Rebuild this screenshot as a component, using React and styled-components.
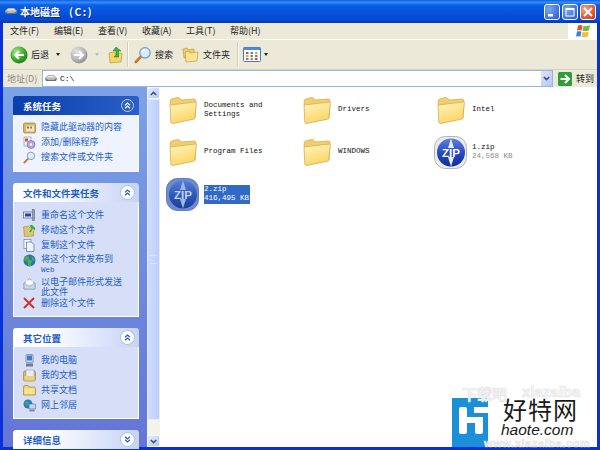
import React from 'react'
import styled, { createGlobalStyle, css } from 'styled-components'

const Global = createGlobalStyle`
  html, body { margin: 0; padding: 0; background: #fff; }
  body { font-family: "Noto Sans CJK SC", "Liberation Sans", sans-serif; }
`

const cjk = `"Noto Sans CJK SC", "Liberation Sans", sans-serif`
const mono = `"Liberation Mono", "Noto Sans CJK SC", monospace`

const Win = styled.div`
  position: relative;
  width: 600px;
  height: 450px;
  overflow: hidden;
  display: flex;
  flex-direction: column;
  background: #0831d9;
  padding: 0 3px 3px;
  box-sizing: border-box;
`
const TitleBar = styled.div`
  height: 23px;
  margin: 0 -3px;
  padding: 0 4px 0 5px;
  flex: none;
  display: flex;
  align-items: center;
  background: linear-gradient(180deg, #0a5fe8 0%, #3a8cf6 10%, #0b5fe6 22%, #0553dd 55%, #0349d2 85%, #0239b8 100%);
`
const TitleText = styled.div`
  margin-left: 3px;
  font: 700 10px ${cjk};
  color: #fff;
  text-shadow: 1px 1px 0 #0a2a90;
  white-space: pre;
  flex: 1;
`
const DriveLetter = styled.span`
  margin-left: 9px;
  letter-spacing: 1.5px;
  font-size: 10.5px;
`
const CapBtn = styled.div`
  width: 16px;
  height: 16px;
  margin-left: 2px;
  box-sizing: border-box;
  border: 1px solid #fff;
  border-radius: 3px;
  display: flex;
  align-items: center;
  justify-content: center;
  background: ${p => p.$close
    ? 'radial-gradient(circle at 30% 30%, #f0a488, #d9512c 70%, #b8371a)'
    : 'radial-gradient(circle at 30% 30%, #7fa6f2, #3c6fe0 70%, #2a55c8)'};
`
const MenuRow = styled.div`
  height: 17px;
  flex: none;
  display: flex;
  background: #ece9d8;
  border-bottom: 1px solid #fdfcf7;
  box-sizing: border-box;
`
const MenuItems = styled.div`
  flex: 1;
  display: flex;
  align-items: center;
  padding: 0 0 1px 7px;
  gap: 13px;
`
const MenuItem = styled.span`
  width: 31px;
  font: 9px ${cjk};
  color: #222;
  white-space: nowrap;
`
const FlagBox = styled.div`
  width: 29px;
  background: #fff;
  display: flex;
  align-items: center;
  justify-content: center;
`
const Toolbar = styled.div`
  height: 30px;
  flex: none;
  display: flex;
  align-items: center;
  padding-left: 7px;
  background: #ece9d8;
  border-bottom: 1px solid #d8d4bf;
  box-sizing: border-box;
`
const ToolText = styled.span`
  font: 9px ${cjk};
  color: #222;
  margin-left: ${p => p.$ml || 3}px;
  margin-right: ${p => p.$mr || 0}px;
  white-space: nowrap;
`
const Caret = styled.span`
  width: 0;
  height: 0;
  border: 2px solid transparent;
  border-top: 3px solid ${p => p.$off ? '#bbb' : '#222'};
  border-bottom: 0;
  margin: 0 ${p => p.$mr || 0}px 0 ${p => p.$ml || 0}px;
`
const Sep = styled.div`
  width: 1px;
  height: 25px;
  background: #d2ceb8;
  border-right: 1px solid #fbfaf4;
  margin: 0 ${p => p.$right}px 0 ${p => p.$left}px;
`
const AddressRow = styled.div`
  height: 17px;
  flex: none;
  display: flex;
  align-items: center;
  background: #ece9d8;
`
const AddrLabel = styled.span`
  width: 39px;
  padding-left: 4px;
  box-sizing: border-box;
  font: 9px ${cjk};
  color: #8a8a80;
  white-space: nowrap;
`
const AddrField = styled.div`
  width: 511px;
  height: 17px;
  box-sizing: border-box;
  background: #fff;
  border: 1px solid #9db4dc;
  display: flex;
  align-items: center;
  padding-left: 2px;
`
const AddrValue = styled.span`
  margin-left: 3px;
  flex: 1;
  font: 8px ${mono};
  color: #111;
`
const DropBtn = styled.div`
  width: 11px;
  height: 15px;
  background: linear-gradient(135deg, #dbe5fb, #b4c8f4);
  display: flex;
  align-items: center;
  justify-content: center;
`
const GoBtn = styled.div`
  margin-left: 5px;
  display: flex;
  align-items: center;
  gap: 4px;
  font: 9px ${cjk};
  color: #222;
`
const Body = styled.div`
  flex: 1;
  min-height: 0;
  display: flex;
  background: #fff;
`
const Sidebar = styled.div`
  width: 144px;
  flex: none;
  padding: 9px 8px 0 10px;
  box-sizing: border-box;
  background: linear-gradient(180deg, #7ba2e7, #6375d6);
  display: flex;
  flex-direction: column;
  gap: 11px;
`
const Panel = styled.div`
  flex: none;
`
const PanelHead = styled.div`
  height: 19px;
  padding: 0 5px 0 10px;
  box-sizing: border-box;
  border-radius: 3px 3px 0 0;
  display: flex;
  align-items: center;
  justify-content: space-between;
  font: 700 9.5px ${cjk};
  ${p => p.$primary
    ? css`
        background: linear-gradient(90deg, #0a3eaa, #2a5ec8);
        color: #fff;
      `
    : css`
        background: linear-gradient(90deg, #fff 25%, #c6d3f7);
        color: #215dc6;
      `}
`
const Chevron = styled.div`
  width: 13px;
  height: 13px;
  border-radius: 50%;
  display: flex;
  align-items: center;
  justify-content: center;
  box-sizing: border-box;
  ${p => p.$primary
    ? css`
        border: 1px solid #b9c9ee;
        background: #2a5ec8;
      `
    : css`
        background: #fff;
        box-shadow: 0 0 0 1px #b4c4ea;
      `}
`
const PanelBody = styled.div`
  padding: ${p => p.$primary ? '6px 4px 9px 9px' : '7px 4px 8px 9px'};
  border: 1px solid #fff;
  border-top: 0;
  display: flex;
  flex-direction: column;
  gap: 4px;
  background: ${p => p.$primary ? '#eff3ff' : '#d6dff7'};
`
const TaskRow = styled.div`
  display: flex;
  align-items: flex-start;
  min-height: 11px;
  font: 9px/${p => p.$pull !== undefined ? 10 : 11}px ${cjk};
  color: #215dc6;
  margin-bottom: ${p => p.$pull || 0}px;
`
const TaskIcon = styled.div`
  width: 18px;
  height: 11px;
  flex: none;
  display: flex;
  justify-content: flex-start;
`
const SmallWeb = styled.span`
  font: 7.5px ${mono};
`
const Scrollbar = styled.div`
  width: 13px;
  flex: none;
  display: flex;
  flex-direction: column;
  background: #f4f3ea;
  box-sizing: border-box;
`
const ScrollArrow = styled.div`
  height: 12px;
  flex: none;
  background: linear-gradient(135deg, #e4ecfd, #b5c8f5);
  border: 1px solid #f4f6fe;
  box-sizing: border-box;
  border-radius: 2px;
  display: flex;
  align-items: center;
  justify-content: center;
`
const ScrollThumb = styled.div`
  flex: none;
  height: 321px;
  background: linear-gradient(90deg, #cfdcfd, #bccffb);
  border: 1px solid #e6ecfe;
  box-sizing: border-box;
  border-radius: 2px;
  display: flex;
  align-items: center;
  justify-content: center;
`
const Grip = styled.div`
  width: 7px;
  height: 7px;
  border-top: 1px solid #dde6fe;
  border-bottom: 1px solid #dde6fe;
`
const ScrollRest = styled.div`
  flex: 1;
`
const FileGrid = styled.div`
  flex: 1;
  padding: 2px 0 0 5px;
  display: grid;
  grid-template-columns: repeat(3, 134px);
  grid-auto-rows: 42px;
  align-content: start;
`
const FileTile = styled.div`
  display: flex;
  align-items: center;
`
const IconSlot = styled.div`
  width: 39px;
  height: 36px;
  flex: none;
  display: flex;
  align-items: center;
  justify-content: center;
  padding-right: 4px;
  box-sizing: border-box;
`
const FileLabel = styled.div`
  font: 7.5px/9.5px ${mono};
  color: #111;
  white-space: pre;
  ${p => p.$selected && css`
    background: #316ac5;
    color: #fff;
    padding-right: 1px;
  `}
`
const FileMeta = styled.span`
  color: ${p => p.$selected ? '#fff' : '#8e8e8e'};
`
const Watermark = styled.div`
  position: absolute;
  left: 452px;
  top: 398px;
  width: 145px;
  height: 49px;
  display: flex;
`
const GhostText = styled.div`
  position: absolute;
  left: ${p => p.$left}px;
  top: ${p => p.$top}px;
  font: 700 ${p => p.$size}px "Liberation Sans", ${cjk};
  letter-spacing: ${p => p.$track || 0}px;
  color: #f8f8f8;
  -webkit-text-stroke: 0.6px #e2e2e2;
  white-space: nowrap;
`
const BrandText = styled.div`
  margin-left: 13px;
  display: flex;
  flex-direction: column;
  position: relative;
`
const BrandName = styled.div`
  font: 24px/26px ${cjk};
  letter-spacing: 1px;
  color: #1a1a1a;
  margin: -2px 0 0 2px;
  white-space: nowrap;
`
const BrandUrl = styled.div`
  font: italic 15.5px/15px "Liberation Sans", sans-serif;
  color: #1a1a1a;
  white-space: nowrap;
`

/* ---- drawn icons ---- */

const DriveIcon = () => (
  <svg width="12" height="9" viewBox="0 0 12 9">
    <path d="M0 4 L3 1 H9 L12 4 L11 7 H1 Z" fill="#b8b8b8" />
    <path d="M0 4 L1 7 H11 L12 4 L9 6 H3 Z" fill="#6f6f6f" />
    <path d="M3 2 H9 L10 3.5 H2 Z" fill="#e6e6e6" />
  </svg>
)

const BackIcon = ({ off }) => (
  <svg width="18" height="18" viewBox="0 0 18 18">
    <defs>
      <radialGradient id={off ? 'gOff' : 'gOn'} cx="35%" cy="30%" r="75%">
        <stop offset="0" stopColor={off ? '#e4e4e4' : '#a6e08a'} />
        <stop offset="0.6" stopColor={off ? '#b8b8b8' : '#3fae2c'} />
        <stop offset="1" stopColor={off ? '#8f8f8f' : '#1a7d14'} />
      </radialGradient>
    </defs>
    <circle cx="9" cy="9" r="8.5" fill={`url(#${off ? 'gOff' : 'gOn'})`} />
    {off
      ? <path d="M4 9 H12 M9 5.2 L13 9 L9 12.8" fill="none" stroke="#fff" strokeWidth="2.2" />
      : <path d="M14 9 H6 M9 5.2 L5 9 L9 12.8" fill="none" stroke="#fff" strokeWidth="2.2" />}
  </svg>
)

const UpFolderIcon = () => (
  <svg width="15" height="18" viewBox="0 0 15 18">
    <path d="M1 7 L6 6 L7 8 L14 7 L13 16 L2 17 Z" fill="#f6d468" stroke="#b7912e" strokeWidth="0.6" />
    <path d="M8 1 L13 5 H10.5 V11 H6 L8 9 V5 H5 Z" fill="#3fae3a" stroke="#1e7d1e" strokeWidth="0.5" />
  </svg>
)

const SearchIcon = ({ size = 18 }) => (
  <svg width={size} height={size} viewBox="0 0 18 18">
    <path d="M7 10.5 L1.8 16" stroke="#c9772c" strokeWidth="2.6" strokeLinecap="round" />
    <circle cx="11" cy="6.8" r="5.2" fill="#d8ecfb" stroke="#7c9dc4" strokeWidth="1.3" />
    <path d="M8 6 A3.2 3.2 0 0 1 11 3.6" fill="none" stroke="#fff" strokeWidth="1.2" />
  </svg>
)

const FoldersIcon = () => (
  <svg width="17" height="16" viewBox="0 0 17 16">
    <path d="M1 2 L5 1 L6 3 L12 2 V9 L2 11 Z" fill="#f0cf6a" stroke="#b5912f" strokeWidth="0.6" />
    <path d="M3 5 L7 4 L8 6 L16 5 L15 14 L4 15 Z" fill="#fbe391" stroke="#b5912f" strokeWidth="0.6" />
  </svg>
)

const ViewsIcon = () => (
  <svg width="18" height="15" viewBox="0 0 18 15">
    <rect x="0.5" y="0.5" width="17" height="14" rx="1" fill="#fff" stroke="#4c76b8" />
    <rect x="0.5" y="0.5" width="17" height="2.5" fill="#4c8ae0" />
    {[3, 7.5, 12].map((x, i) => [5, 8, 11].map((y, j) => (
      <rect key={`${i}${j}`} x={x} y={y} width="2.5" height="2"
        fill={['#d8463a', '#3f8fd8', '#e0a830', '#4aa84a', '#8a6ac8', '#d87a3a'][(i + j * 2) % 6]} />
    )))}
  </svg>
)

const FlagIcon = () => (
  <svg width="16" height="15" viewBox="0 0 16 15">
    <path d="M3 1.5 Q5 0.5 7.5 1.5 L6.6 6.5 Q4.4 5.6 2 6.5 Z" fill="#e2552c" />
    <path d="M8.5 1.8 Q11 3 15 1 L14 6.2 Q10.8 7.6 7.6 6.8 Z" fill="#7cb83c" />
    <path d="M2 7.6 Q4.2 6.7 6.4 7.6 L5.5 12.6 Q3.4 11.8 1 12.6 Z" fill="#3f7fd8" />
    <path d="M7.4 8 Q10.6 8.8 13.8 7.4 L12.8 12.6 Q9.6 14 6.5 13 Z" fill="#f2c22e" />
  </svg>
)

const GoIcon = () => (
  <svg width="14" height="14" viewBox="0 0 14 14">
    <rect width="14" height="14" rx="1.5" fill="#2f9e3a" />
    <path d="M2.5 7 H10 M7 3 L11 7 L7 11" fill="none" stroke="#fff" strokeWidth="2" />
  </svg>
)

const DoubleChevron = ({ down, color = '#215dc6' }) => (
  <svg width="7" height="7" viewBox="0 0 7 7">
    <path d={down ? 'M1 0.8 L3.5 3 L6 0.8 M1 3.8 L3.5 6 L6 3.8' : 'M1 3.2 L3.5 1 L6 3.2 M1 6.2 L3.5 4 L6 6.2'}
      fill="none" stroke={color} strokeWidth="1.2" />
  </svg>
)

const ArrowGlyph = ({ down }) => (
  <svg width="7" height="5" viewBox="0 0 7 5">
    <path d={down ? 'M0.8 1 L3.5 3.6 L6.2 1' : 'M0.8 4 L3.5 1.4 L6.2 4'} fill="none" stroke="#3a4f7a" strokeWidth="1.5" />
  </svg>
)

const FolderIcon = () => (
  <svg width="28" height="27" viewBox="0 0 28 27">
    <defs>
      <linearGradient id="fold" x1="0" y1="0" x2="0.4" y2="1">
        <stop offset="0" stopColor="#fff4c0" />
        <stop offset="1" stopColor="#fcd768" />
      </linearGradient>
    </defs>
    <path d="M1 5 Q1 2 4 1.5 L9 0.5 Q11 0.5 12 3 L25 2 Q27 2 27 4 L26 21 L3 26 Z" fill="#f3cf6c" stroke="#d0a848" strokeWidth="0.7" />
    <path d="M1 8 L26.6 5 Q27.4 5 27.3 6.5 L25.8 21 Q25.7 22 24.5 22.2 L4 26.4 Q2 26.6 1.8 25 Z" fill="url(#fold)" stroke="#d0a848" strokeWidth="0.7" />
  </svg>
)

const ZipIcon = ({ faded }) => {
  const id = faded ? 'zipSel' : 'zipNorm'
  return (
    <svg width="33" height="33" viewBox="0 0 33 33">
      <defs>
        <linearGradient id={id} x1="0" y1="0" x2="0" y2="1">
          <stop offset="0" stopColor={faded ? '#5a7cd8' : '#5f7fe0'} />
          <stop offset="0.55" stopColor={faded ? '#2c56b8' : '#2446c0'} />
          <stop offset="1" stopColor={faded ? '#1a3f9e' : '#0f2f98'} />
        </linearGradient>
      </defs>
      <rect x="0.5" y="0.5" width="32" height="32" rx="11" fill={faded ? '#6f8cc8' : '#ececec'} stroke={faded ? '#5d7dbd' : '#b4b4b4'} />
      <circle cx="17" cy="16.5" r="14" fill={`url(#${id})`} />
      <path d="M17 2.5 L20 12 H14 Z M17 30.5 L14 21 H20 Z" fill={faded ? '#9db6e6' : '#e8eefb'} />
      <text x="17" y="20.7" textAnchor="middle" fontFamily="Liberation Sans" fontWeight="700" fontSize="11.5" fill={faded ? '#c4d4f4' : '#fff'}>ZIP</text>
    </svg>
  )
}

const TaskGlyph = ({ kind }) => {
  switch (kind) {
    case 'hide':
      return (
        <svg width="13" height="13" viewBox="0 0 13 13">
          <rect x="0.5" y="2" width="12" height="10" rx="1.5" fill="#d8b45a" stroke="#8f7430" strokeWidth="0.6" />
          <rect x="3" y="4.5" width="8" height="6" fill="#f4e6c0" />
          <rect x="4" y="5.5" width="2" height="2" fill="#d85a3a" />
          <rect x="7" y="5.5" width="2" height="2" fill="#4a8ad8" />
        </svg>
      )
    case 'add':
      return (
        <svg width="13" height="13" viewBox="0 0 13 13">
          <rect x="1" y="1" width="7" height="9" fill="#f2f2f2" stroke="#808aa8" strokeWidth="0.6" />
          <circle cx="8" cy="8.5" r="4" fill="#b4a4e4" stroke="#6a6aa8" strokeWidth="0.6" />
          <circle cx="8" cy="8.5" r="1.2" fill="#fff" />
          <rect x="2" y="2.5" width="3" height="3" fill="#d8583a" />
        </svg>
      )
    case 'rename':
      return (
        <svg width="13" height="12" viewBox="0 0 13 12">
          <rect x="0.5" y="3" width="10" height="6" fill="#e8ecf4" stroke="#55607a" strokeWidth="0.7" />
          <rect x="2" y="4.5" width="6" height="3" fill="#2244aa" />
          <rect x="9.2" y="0.5" width="2.5" height="11" fill="#9aa2b2" stroke="#55607a" strokeWidth="0.5" />
        </svg>
      )
    case 'move':
      return (
        <svg width="13" height="13" viewBox="0 0 13 13">
          <path d="M0.5 3 L5 2 L6 3.5 L11 3 L10.5 12 L1.5 12.5 Z" fill="#e2c468" stroke="#96793a" strokeWidth="0.5" />
          <path d="M6 1 L9 0.5 L12.5 4 V7 L10 5 L8 9 L5.5 8 L8 4.5 Z" fill="#40a83c" stroke="#fff" strokeWidth="0.4" />
        </svg>
      )
    case 'copy':
      return (
        <svg width="12" height="13" viewBox="0 0 12 13">
          <rect x="1" y="0.5" width="7" height="9" fill="#fff" stroke="#6f7f9f" strokeWidth="0.7" />
          <path d="M3.5 3 H8.5 L11 5.5 V12.5 H3.5 Z" fill="#eef2fa" stroke="#4f6a9f" strokeWidth="0.7" />
        </svg>
      )
    case 'web':
      return (
        <svg width="13" height="13" viewBox="0 0 13 13">
          <circle cx="6.5" cy="6.5" r="6" fill="#2d6cc4" />
          <path d="M2 3 Q5 1 6 3 T4 7 Q1 7 1 5 Z M8 2 Q12 4 11.5 8 L9 6 Z" fill="#4cae44" />
          <path d="M6.5 5 L10 8.5 H8 V12 H5 V8.5 H3 Z" fill="#46b83e" />
        </svg>
      )
    case 'mail':
      return (
        <svg width="13" height="13" viewBox="0 0 13 13">
          <path d="M1 6 L6.5 1.5 L12 6 V12 H1 Z" fill="#e4e4d8" stroke="#7f8aa0" strokeWidth="0.6" />
          <rect x="3" y="3.5" width="7" height="4" fill="#fff" />
          <path d="M1 6 L6.5 9.5 L12 6 V12 H1 Z" fill="#c8d8f2" stroke="#7f8aa0" strokeWidth="0.5" />
        </svg>
      )
    case 'delete':
      return (
        <svg width="12" height="12" viewBox="0 0 12 12">
          <path d="M1 1 L11 11 M11 1 L1 11" stroke="#d42a2a" strokeWidth="1.8" />
        </svg>
      )
    case 'pc':
      return (
        <svg width="13" height="13" viewBox="0 0 13 13">
          <rect x="3" y="0.5" width="7" height="8" rx="1" fill="#d4dcea" stroke="#5a6a8a" strokeWidth="0.6" />
          <rect x="4" y="1.5" width="5" height="5" fill="#3c7ad0" />
          <rect x="3" y="9.5" width="7" height="3" fill="#6a7a9a" />
        </svg>
      )
    case 'docs':
      return (
        <svg width="13" height="13" viewBox="0 0 13 13">
          <rect x="0.5" y="2" width="12" height="10" rx="1.5" fill="#e0b858" stroke="#96793a" strokeWidth="0.6" />
          <rect x="3" y="1" width="8" height="9" fill="#e8eef8" stroke="#7f8aa0" strokeWidth="0.5" />
          <rect x="1.5" y="7" width="10" height="4.5" fill="#f0d078" />
        </svg>
      )
    case 'shared':
      return (
        <svg width="13" height="12" viewBox="0 0 13 12">
          <path d="M0.5 3 Q0.5 1.5 2 1.5 H5 L6 3 H11 Q12.5 3 12.5 4.5 V11 H0.5 Z" fill="#f2cf60" stroke="#96793a" strokeWidth="0.6" />
          <rect x="1.5" y="4.5" width="10" height="5.5" fill="#fbe389" />
        </svg>
      )
    case 'net':
      return (
        <svg width="13" height="13" viewBox="0 0 13 13">
          <circle cx="5" cy="5" r="4.5" fill="#2d7cc4" />
          <path d="M2 3 Q5 1 6 4 L3 7 Z" fill="#4cae44" />
          <rect x="6" y="5" width="6.5" height="5" fill="#bcd8f2" stroke="#5a6a8a" strokeWidth="0.6" />
          <rect x="6.5" y="10.5" width="5" height="2" fill="#7a8aaa" />
        </svg>
      )
    default:
      return <SearchIcon size={13} />
  }
}

const LogoMark = () => (
  <svg width="36" height="49" viewBox="0 0 36 49" style={{ flex: 'none' }}>
    <rect width="36" height="49" fill="#1b8fd8" />
    <rect x="7" y="9" width="8" height="27" rx="2" fill="#fff" />
    <rect x="7" y="19" width="24" height="6" fill="#fff" />
    <rect x="23" y="19" width="8" height="17" rx="2" fill="#fff" />
    <rect x="22" y="9" width="14" height="6" fill="#fff" />
  </svg>
)

const menus = ['文件(F)', '编辑(E)', '查看(V)', '收藏(A)', '工具(T)', '帮助(H)']

const panels = [
  {
    title: '系统任务',
    primary: true,
    tasks: [
      { icon: 'hide', text: '隐藏此驱动器的内容' },
      { icon: 'add', text: '添加/删除程序' },
      { icon: 'search', text: '搜索文件或文件夹' },
    ],
  },
  {
    title: '文件和文件夹任务',
    tasks: [
      { icon: 'rename', text: '重命名这个文件' },
      { icon: 'move', text: '移动这个文件' },
      { icon: 'copy', text: '复制这个文件' },
      { icon: 'web', pull: -1, text: <>将这个文件发布到<br /><SmallWeb>Web</SmallWeb></> },
      { icon: 'mail', pull: -4, text: <>以电子邮件形式发送<br />此文件</> },
      { icon: 'delete', text: '删除这个文件' },
    ],
  },
  {
    title: '其它位置',
    tasks: [
      { icon: 'pc', text: '我的电脑' },
      { icon: 'docs', text: '我的文档' },
      { icon: 'shared', text: '共享文档' },
      { icon: 'net', text: '网上邻居' },
    ],
  },
]

const files = [
  { name: 'Documents and\nSettings' },
  { name: 'Drivers' },
  { name: 'Intel' },
  { name: 'Program Files' },
  { name: 'WINDOWS' },
  { name: '1.zip', size: '24,568 KB', zip: true },
  { name: '2.zip', size: '416,495 KB', zip: true, selected: true },
]

const App = () => (
  <Win>
    <Global />
    <TitleBar>
      <DriveIcon />
      <TitleText>本地磁盘<DriveLetter>(C:)</DriveLetter></TitleText>
      <CapBtn>
        <svg width="10" height="10" viewBox="0 0 10 10"><rect x="1" y="7" width="5" height="2.5" fill="#fff" /></svg>
      </CapBtn>
      <CapBtn>
        <svg width="10" height="10" viewBox="0 0 10 10"><rect x="1" y="1.5" width="8" height="7.5" fill="none" stroke="#fff" strokeWidth="1" /><rect x="1" y="1" width="8" height="2" fill="#fff" /></svg>
      </CapBtn>
      <CapBtn $close>
        <svg width="10" height="10" viewBox="0 0 10 10"><path d="M1 1 L9 9 M9 1 L1 9" stroke="#fff" strokeWidth="1.8" /></svg>
      </CapBtn>
    </TitleBar>
    <MenuRow>
      <MenuItems>
        {menus.map(m => <MenuItem key={m}>{m}</MenuItem>)}
      </MenuItems>
      <FlagBox><FlagIcon /></FlagBox>
    </MenuRow>
    <Toolbar>
      <BackIcon />
      <ToolText>后退</ToolText>
      <Caret $ml={7} $mr={10} />
      <BackIcon off />
      <Caret $off $ml={7} $mr={9} />
      <UpFolderIcon />
      <Sep $left={4} $right={5} />
      <SearchIcon />
      <ToolText $mr={9}>搜索</ToolText>
      <FoldersIcon />
      <ToolText $ml={4}>文件夹</ToolText>
      <Sep $left={7} $right={4} />
      <ViewsIcon />
      <Caret $ml={3} />
    </Toolbar>
    <AddressRow>
      <AddrLabel>地址(D)</AddrLabel>
      <AddrField>
        <DriveIcon />
        <AddrValue>C:\</AddrValue>
        <DropBtn><ArrowGlyph down /></DropBtn>
      </AddrField>
      <GoBtn><GoIcon />转到</GoBtn>
    </AddressRow>
    <Body>
      <Sidebar>
        {panels.map(p => (
          <Panel key={p.title}>
            <PanelHead $primary={p.primary}>
              {p.title}
              <Chevron $primary={p.primary}><DoubleChevron color={p.primary ? '#fff' : '#215dc6'} /></Chevron>
            </PanelHead>
            <PanelBody $primary={p.primary}>
              {p.tasks.map(t => (
                <TaskRow key={t.icon} $pull={t.pull}>
                  <TaskIcon><TaskGlyph kind={t.icon} /></TaskIcon>
                  <span>{t.text}</span>
                </TaskRow>
              ))}
            </PanelBody>
          </Panel>
        ))}
        <Panel>
          <PanelHead>
            详细信息
            <Chevron><DoubleChevron down /></Chevron>
          </PanelHead>
        </Panel>
      </Sidebar>
      <Scrollbar>
        <ScrollArrow><ArrowGlyph /></ScrollArrow>
        <ScrollThumb><Grip /></ScrollThumb>
        <ScrollRest />
        <ScrollArrow><ArrowGlyph down /></ScrollArrow>
      </Scrollbar>
      <FileGrid>
        {files.map(f => (
          <FileTile key={f.name}>
            <IconSlot>{f.zip ? <ZipIcon faded={f.selected} /> : <FolderIcon />}</IconSlot>
            <FileLabel $selected={f.selected}>
              {f.name}
              {f.size && <><br /><FileMeta $selected={f.selected}>{f.size}</FileMeta></>}
            </FileLabel>
          </FileTile>
        ))}
      </FileGrid>
    </Body>
    <Watermark>
      <GhostText $left={10} $top={-15} $size={15}>下载吧</GhostText>
      <GhostText $left={70} $top={-15} $size={15}>xiazaiba</GhostText>
      <GhostText $left={32} $top={39} $size={11} $track={0.6}>www.xiazaiba.com</GhostText>
      <LogoMark />
      <BrandText>
        <BrandName>好特网</BrandName>
        <BrandUrl>haote.com</BrandUrl>
      </BrandText>
    </Watermark>
  </Win>
)

export default App
